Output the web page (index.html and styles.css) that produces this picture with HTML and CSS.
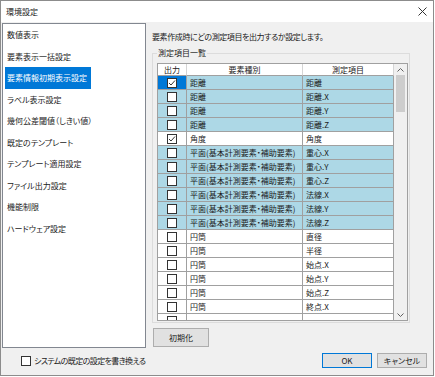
FILE: index.html
```html
<!DOCTYPE html>
<html lang="ja">
<head>
    <meta charset="UTF-8">
    <title>環境設定</title>
    <link rel="stylesheet" href="styles.css">
</head>
<body>
    <div class="window">
        <div class="titlebar">
            <span class="title">環境設定</span>
            <svg class="close" width="9" height="9" viewBox="0 0 9 9">
                <path d="M0.5 0.5 L8.5 8.5 M8.5 0.5 L0.5 8.5" stroke="#333" stroke-width="1" fill="none"/>
            </svg>
        </div>
        <div class="client">
            <div class="main">
                <ul class="nav-list">
                    <li><span>数値表示</span></li>
                    <li><span>要素表示一括設定</span></li>
                    <li class="selected"><span>要素情報初期表示設定</span></li>
                    <li><span>ラベル表示設定</span></li>
                    <li><span>幾何公差閾値（しきい値）</span></li>
                    <li><span>既定のテンプレート</span></li>
                    <li><span>テンプレート適用設定</span></li>
                    <li><span>ファイル出力設定</span></li>
                    <li><span>機能制限</span></li>
                    <li><span>ハードウェア設定</span></li>
                </ul>
                <div class="panel">
                    <p class="desc">要素作成時にどの測定項目を出力するか設定します。</p>
                    <fieldset class="group">
                        <legend>測定項目一覧</legend>
                        <div class="grid">
                            <div class="grid-body">
                                <table>
                                    <thead>
                                        <tr>
                                            <th class="col-out">出力</th>
                                            <th class="col-kind">要素種別</th>
                                            <th class="col-item">測定項目</th>
                                        </tr>
                                    </thead>
                                    <tbody>
                                        <tr class="blue">
                                            <td class="out sel"><span class="cb"><svg width="8" height="8" viewBox="0 0 8 8"><path d="M1 4 L3 6 L7 1.5" stroke="#333" stroke-width="1" fill="none"/></svg></span></td>
                                            <td>距離</td><td>距離</td>
                                        </tr>
                                        <tr class="blue"><td class="out"><span class="cb"></span></td><td>距離</td><td>距離.X</td></tr>
                                        <tr class="blue"><td class="out"><span class="cb"></span></td><td>距離</td><td>距離.Y</td></tr>
                                        <tr class="blue"><td class="out"><span class="cb"></span></td><td>距離</td><td>距離.Z</td></tr>
                                        <tr>
                                            <td class="out"><span class="cb"><svg width="8" height="8" viewBox="0 0 8 8"><path d="M1 4 L3 6 L7 1.5" stroke="#333" stroke-width="1" fill="none"/></svg></span></td>
                                            <td>角度</td><td>角度</td>
                                        </tr>
                                        <tr class="blue"><td class="out"><span class="cb"></span></td><td>平面(基本計測要素・補助要素)</td><td>重心.X</td></tr>
                                        <tr class="blue"><td class="out"><span class="cb"></span></td><td>平面(基本計測要素・補助要素)</td><td>重心.Y</td></tr>
                                        <tr class="blue"><td class="out"><span class="cb"></span></td><td>平面(基本計測要素・補助要素)</td><td>重心.Z</td></tr>
                                        <tr class="blue"><td class="out"><span class="cb"></span></td><td>平面(基本計測要素・補助要素)</td><td>法線.X</td></tr>
                                        <tr class="blue"><td class="out"><span class="cb"></span></td><td>平面(基本計測要素・補助要素)</td><td>法線.Y</td></tr>
                                        <tr class="blue"><td class="out"><span class="cb"></span></td><td>平面(基本計測要素・補助要素)</td><td>法線.Z</td></tr>
                                        <tr><td class="out"><span class="cb"></span></td><td>円筒</td><td>直径</td></tr>
                                        <tr><td class="out"><span class="cb"></span></td><td>円筒</td><td>半径</td></tr>
                                        <tr><td class="out"><span class="cb"></span></td><td>円筒</td><td>始点.X</td></tr>
                                        <tr><td class="out"><span class="cb"></span></td><td>円筒</td><td>始点.Y</td></tr>
                                        <tr><td class="out"><span class="cb"></span></td><td>円筒</td><td>始点.Z</td></tr>
                                        <tr><td class="out"><span class="cb"></span></td><td>円筒</td><td>終点.X</td></tr>
                                        <tr class="partial"><td class="out"><span class="cb"></span></td><td></td><td></td></tr>
                                    </tbody>
                                </table>
                            </div>
                            <div class="scrollbar">
                                <span class="sb-arrow">
                                    <svg width="7" height="4" viewBox="0 0 7 4"><path d="M0.5 3.5 L3.5 0.5 L6.5 3.5" stroke="#606060" stroke-width="1" fill="none"/></svg>
                                </span>
                                <span class="sb-thumb"></span>
                                <span class="sb-track"></span>
                                <span class="sb-arrow">
                                    <svg width="7" height="4" viewBox="0 0 7 4"><path d="M0.5 0.5 L3.5 3.5 L6.5 0.5" stroke="#606060" stroke-width="1" fill="none"/></svg>
                                </span>
                            </div>
                        </div>
                    </fieldset>
                    <button class="btn btn-reset">初期化</button>
                </div>
            </div>
            <div class="footer">
                <label class="sys-option"><span class="cb"></span>システムの既定の設定を書き換える</label>
                <button class="btn btn-ok">OK</button>
                <button class="btn">キャンセル</button>
            </div>
        </div>
    </div>
</body>
</html>
```

FILE: styles.css
```css
* {
    box-sizing: border-box;
}
body {
    margin: 0;
    font-family: "Noto Sans CJK JP", "Noto Sans", sans-serif;
    font-size: 8px;
    font-feature-settings: "palt";
    color: #1a1a1a;
    background-color: #fff;
}
.window {
    width: 434px;
    height: 376px;
    border: 1px solid #8c8c8c;
    display: flex;
    flex-direction: column;
    background-color: #f0f0f0;
}
.titlebar {
    height: 21px;
    flex-shrink: 0;
    background-color: #fff;
    display: flex;
    align-items: center;
    justify-content: space-between;
    padding: 0 6px 0 5px;
}
.title {
    line-height: 10px;
}
.client {
    flex: 1;
    display: flex;
    flex-direction: column;
    padding-top: 1px;
}
.main {
    display: flex;
    height: 325px;
}
.nav-list {
    width: 144px;
    height: 325px;
    margin: 0 0 0 1px;
    padding: 0;
    list-style: none;
    background-color: #fff;
    border: 1px solid #828790;
}
.nav-list li {
    height: 21.5px;
    padding-left: 2px;
    display: flex;
}
.nav-list span {
    line-height: 21.5px;
    padding: 0 4px 0 2px;
}
.nav-list .selected span {
    background-color: #0078d7;
    color: #fff;
}
.panel {
    flex: 1;
    display: flex;
    flex-direction: column;
    padding: 0 23px 0 6px;
}
.desc {
    margin: 9px 0 0;
    line-height: 10px;
    letter-spacing: -0.4px;
}
.group {
    margin: 6px 0 0;
    padding: 5px 1px 1px 4px;
    border: 1px solid #dcdcdc;
    min-width: 0;
}
.group legend {
    padding: 0 1px;
    line-height: 10px;
}
.grid {
    display: flex;
    width: 251px;
    height: 258px;
    border: 1px solid #a0a0a0;
    background-color: #fff;
    overflow: hidden;
}
.grid-body {
    width: 236px;
    flex-shrink: 0;
    overflow: hidden;
}
table {
    width: 236px;
    table-layout: fixed;
    border-spacing: 0;
}
th,
td {
    height: 14px;
    padding: 0 0 0 3px;
    border-right: 1px solid #a0a0a0;
    border-bottom: 1px solid #a0a0a0;
    white-space: nowrap;
    overflow: hidden;
    line-height: 13px;
    text-align: left;
    font-weight: normal;
}
th {
    height: 12px;
    padding: 0;
    line-height: 11px;
    text-align: center;
    border-right-color: #d5d5d5;
}
.col-out {
    width: 29px;
}
.col-kind {
    width: 116px;
}
.col-item {
    width: 91px;
}
td.out {
    padding: 0;
    vertical-align: middle;
}
.blue td {
    background-color: #add8e6;
}
.blue td.sel {
    background-color: #0078d7;
}
.cb {
    display: block;
    width: 10px;
    height: 10px;
    margin: 0 auto;
    border: 1px solid #333;
    background-color: #fff;
}
.cb svg {
    display: block;
}
.scrollbar {
    width: 13px;
    display: flex;
    flex-direction: column;
    align-items: center;
    background-color: #f0f0f0;
}
.sb-arrow {
    height: 11px;
    display: flex;
    align-items: center;
    justify-content: center;
}
.sb-thumb {
    width: 9px;
    height: 37px;
    background-color: #cdcdcd;
}
.sb-track {
    flex: 1;
}
.btn {
    font-family: inherit;
    font-size: 8px;
    font-feature-settings: "palt";
    color: #1a1a1a;
    background-color: #e1e1e1;
    border: 1px solid #adadad;
    padding: 0;
    margin: 0;
    height: 15px;
    width: 50px;
    line-height: 13px;
}
.btn-reset {
    align-self: flex-start;
    width: 56px;
    height: 19px;
    margin: 5px 0 0 1px;
}
.btn-ok {
    border-color: #0078d7;
}
.footer {
    display: flex;
    align-items: center;
    gap: 5px;
    height: 15px;
    margin-top: 5px;
    padding: 0 6px 0 20px;
}
.sys-option {
    display: flex;
    align-items: center;
    gap: 3px;
    margin-right: auto;
    letter-spacing: -0.6px;
}
.sys-option .cb {
    margin: 0;
}
```
